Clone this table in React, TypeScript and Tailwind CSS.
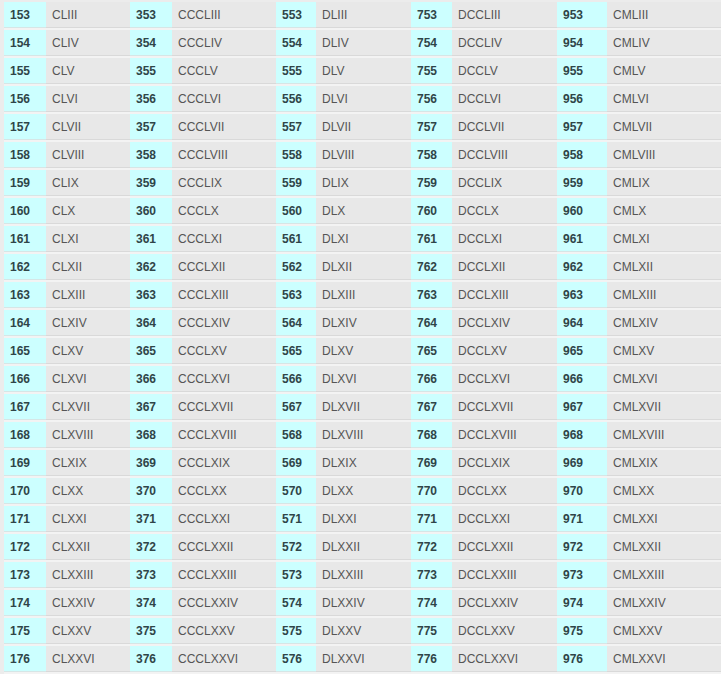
import React from "react";

const toRoman = (n: number) => {
  const map: [number, string][] = [
    [1000, "M"], [900, "CM"], [500, "D"], [400, "CD"], [100, "C"], [90, "XC"],
    [50, "L"], [40, "XL"], [10, "X"], [9, "IX"], [5, "V"], [4, "IV"], [1, "I"],
  ];
  let r = "";
  for (const [v, s] of map) {
    while (n >= v) {
      r += s;
      n -= v;
    }
  }
  return r;
};

const cols = [
  { base: 100, nw: "w-[42px]", tw: "w-[84px]" },
  { base: 300, nw: "w-[42px]", tw: "w-[104px]" },
  { base: 500, nw: "w-[40px]", tw: "w-[95px]" },
  { base: 700, nw: "w-[41px]", tw: "w-[105px]" },
  { base: 900, nw: "w-[50px]", tw: "w-[114px]" },
];

const rows = Array.from({ length: 24 }, (_, i) => 53 + i);

export default function App() {
  return (
    <div
      className="w-[727px] h-[676px] bg-white overflow-hidden"
      style={{ fontFamily: '"Liberation Sans", Arial, sans-serif' }}
    >
      <div className="w-[721px] bg-[#ececec] pl-[4px] pt-[2px]">
        {rows.map((r) => (
          <div
            key={r}
            className="flex h-[28px] border-b-2 border-b-[#f3f3f3]"
          >
            {cols.map((c) => {
              const n = c.base + r;
              return (
                <React.Fragment key={c.base}>
                  <div
                    className={`${c.nw} shrink-0 bg-[#ccffff] border-b border-b-[#d6e6e6] flex items-center pl-[6px] text-[12px] font-bold text-[#2f4548]`}
                  >
                    {n}
                  </div>
                  <div
                    className={`${c.tw} shrink-0 bg-[#e8e8e8] border-b border-b-[#d9d9d9] flex items-center pl-[6px] text-[12px] text-[#555555]`}
                  >
                    {toRoman(n)}
                  </div>
                </React.Fragment>
              );
            })}
          </div>
        ))}
      </div>
    </div>
  );
}
